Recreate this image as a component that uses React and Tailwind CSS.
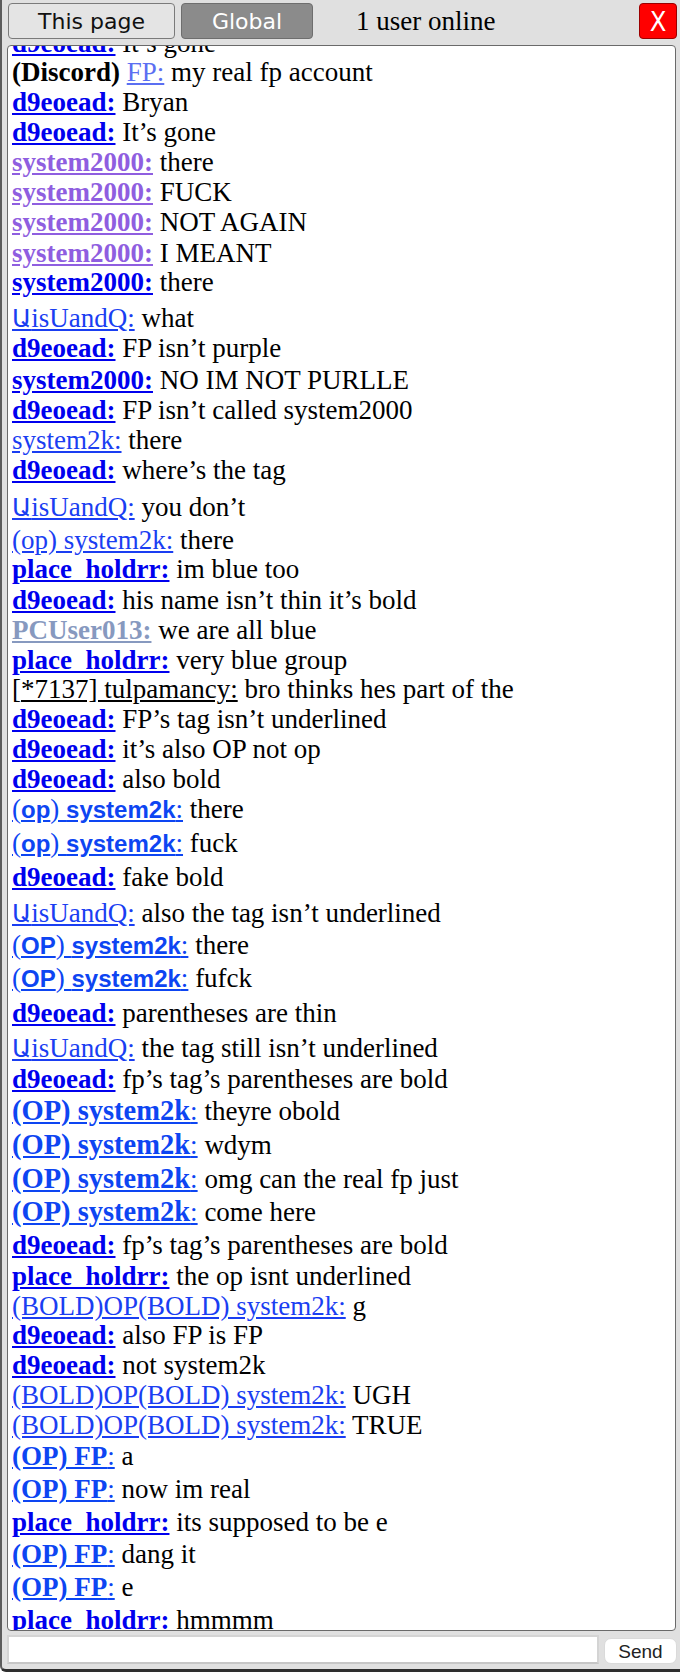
import React from "react";

const blue = "font-bold text-[#0000ee] underline";
const thinBlue = "text-[#1a3ef2] underline";
const opBlue = "text-[#0d45f2] underline";
const sansBold = "font-bold font-['Liberation_Sans',Arial,sans-serif] text-[24px]";

const d9 = <span className={blue}>d9eoead:</span>;
const ph = <span className={blue}>place_holdrr:</span>;
const sysPurple = <span className="font-bold text-[#8f5ee0] underline">system2000:</span>;
const sysBlue = <span className={blue}>system2000:</span>;

const uq = (
  <span className={thinBlue}>
    <span className="font-['DejaVu_Sans',sans-serif] text-[25px]">Ա</span>isUandQ:
  </span>
);

const discord = (
  <>
    <span className="font-bold">(Discord)</span>{" "}
    <span className="text-[#5b6ff2] underline">FP:</span>
  </>
);

const opLower = (
  <span className={opBlue}>
    (<span className={sansBold}>op</span>) <span className={sansBold}>system2k</span>:
  </span>
);

const opSans = (
  <span className={opBlue}>
    (<span className={sansBold}>OP</span>) <span className={sansBold}>system2k</span>:
  </span>
);

const opSerif = (
  <span className={opBlue}>
    <span className="font-bold text-[28.5px]">(OP) system2k</span>:
  </span>
);

const fpOp = (
  <span className={opBlue}>
    <span className="font-bold">(OP) FP</span>:
  </span>
);

const boldTag = <span className={thinBlue}>(BOLD)OP(BOLD) system2k:</span>;

// [row spacing class, name, message]
const rows = [
  ["", d9, "It’s gone"],
  ["leading-[29px]", discord, "my real fp account"],
  ["", d9, "Bryan"],
  ["", d9, "It’s gone"],
  ["", sysPurple, "there"],
  ["", sysPurple, "FUCK"],
  ["", sysPurple, "NOT AGAIN"],
  ["pt-[1px]", sysPurple, "I MEANT"],
  ["leading-[29px]", sysBlue, "there"],
  ["pt-[6px]", uq, "what"],
  ["leading-[29px]", d9, "FP isn’t purple"],
  ["pt-[2px]", sysBlue, "NO IM NOT PURLLE"],
  ["", d9, "FP isn’t called system2000"],
  ["", <span className={thinBlue}>system2k:</span>, "there"],
  ["", d9, "where’s the tag"],
  ["pt-[7px]", uq, "you don’t"],
  ["pt-[2px]", <span className={thinBlue}>(op) system2k:</span>, "there"],
  ["leading-[29px]", ph, "im blue too"],
  ["pt-[1px]", d9, "his name isn’t thin it’s bold"],
  ["", <span className="font-bold text-[#8799bf] underline">PCUser013:</span>, "we are all blue"],
  ["", ph, "very blue group"],
  [
    "leading-[29px]",
    <>
      [<span className="underline">*7137] tulpamancy:</span>
    </>,
    "bro thinks hes part of the",
  ],
  ["", d9, "FP’s tag isn’t underlined"],
  ["", d9, "it’s also OP not op"],
  ["", d9, "also bold"],
  ["", opLower, "there"],
  ["pt-[3px]", opLower, "fuck"],
  ["pt-[3px]", d9, "fake bold"],
  ["pt-[6px]", uq, "also the tag isn’t underlined"],
  ["pt-[1px]", opSans, "there"],
  ["pt-[2px]", opSans, "fufck"],
  ["pt-[4px]", d9, "parentheses are thin"],
  ["pt-[5px]", uq, "the tag still isn’t underlined"],
  ["", d9, "fp’s tag’s parentheses are bold"],
  ["pt-[2px]", opSerif, "theyre obold"],
  ["pt-[4px]", opSerif, "wdym"],
  ["pt-[4px]", opSerif, "omg can the real fp just"],
  ["pt-[3px]", opSerif, "come here"],
  ["pt-[3px]", d9, "fp’s tag’s parentheses are bold"],
  ["pt-[1px]", ph, "the op isnt underlined"],
  ["", boldTag, "g"],
  ["leading-[29px]", d9, "also FP is FP"],
  ["", d9, "not system2k"],
  ["", boldTag, "UGH"],
  ["", boldTag, "TRUE"],
  ["pt-[1px]", fpOp, "a"],
  ["pt-[3px]", fpOp, "now im real"],
  ["pt-[3px]", ph, "its supposed to be e"],
  ["pt-[2px]", fpOp, "dang it"],
  ["pt-[3px]", fpOp, "e"],
  ["pt-[3px]", ph, "hmmmm"],
];

export default function App() {
  return (
    <div className="h-[1672px] w-[680px] overflow-hidden flex flex-col bg-[#e0e0e0] border-l-2 border-b-[3px] border-l-[#5c5c5c] border-b-[#2e2e2e] rounded-bl-[6px]">
      {/* Top bar */}
      <div className="flex items-center h-[36px] mt-[3px] pl-[6px] pr-[3px]">
        <button className="w-[167px] h-[36px] rounded-[4px] border border-[#7a7a7a] bg-[#e4e4e4] text-[22px] text-[#111] font-['DejaVu_Sans',sans-serif]">
          This page
        </button>
        <button className="ml-[6px] w-[132px] h-[36px] rounded-[4px] border border-[#6e6e6e] bg-[#8b8b8b] text-[22px] text-white font-['DejaVu_Sans',sans-serif]">
          Global
        </button>
        <span className="ml-[43px] text-[27px] text-black font-['Liberation_Serif',serif]">
          1 user online
        </span>
        <button className="ml-auto w-[38px] h-[36px] rounded-[4px] border border-[#9b0000] bg-[#ff0000] text-[27px] leading-none text-white font-['DejaVu_Sans_Condensed','DejaVu_Sans',sans-serif]">
          X
        </button>
      </div>

      {/* Messages */}
      <div className="mt-[6px] ml-[5px] mr-[4px] h-[1586px] shrink-0 overflow-hidden rounded-[4px] border border-[#6a6a6a] bg-white pl-[4px]">
        <div className="-mt-[18px] text-[27px] leading-[30px] text-black font-['Liberation_Serif','Times_New_Roman',serif]">
          {rows.map(([cls, name, msg], i) => (
            <div key={i} className={"whitespace-nowrap " + cls}>
              {name} {msg}
            </div>
          ))}
        </div>
      </div>

      {/* Input */}
      <div className="flex items-end gap-[5px] mt-[4px] pl-[5px] pr-[3px]">
        <input
          type="text"
          className="w-[592px] h-[29px] border-2 border-[#d4d4d4] border-b-[#c6c6c6] bg-white outline-none"
        />
        <button className="w-[73px] h-[26px] rounded-[7px] border border-[#dadada] bg-white text-[19px] leading-none text-[#222] font-['Liberation_Sans',Arial,sans-serif]">
          Send
        </button>
      </div>
    </div>
  );
}
